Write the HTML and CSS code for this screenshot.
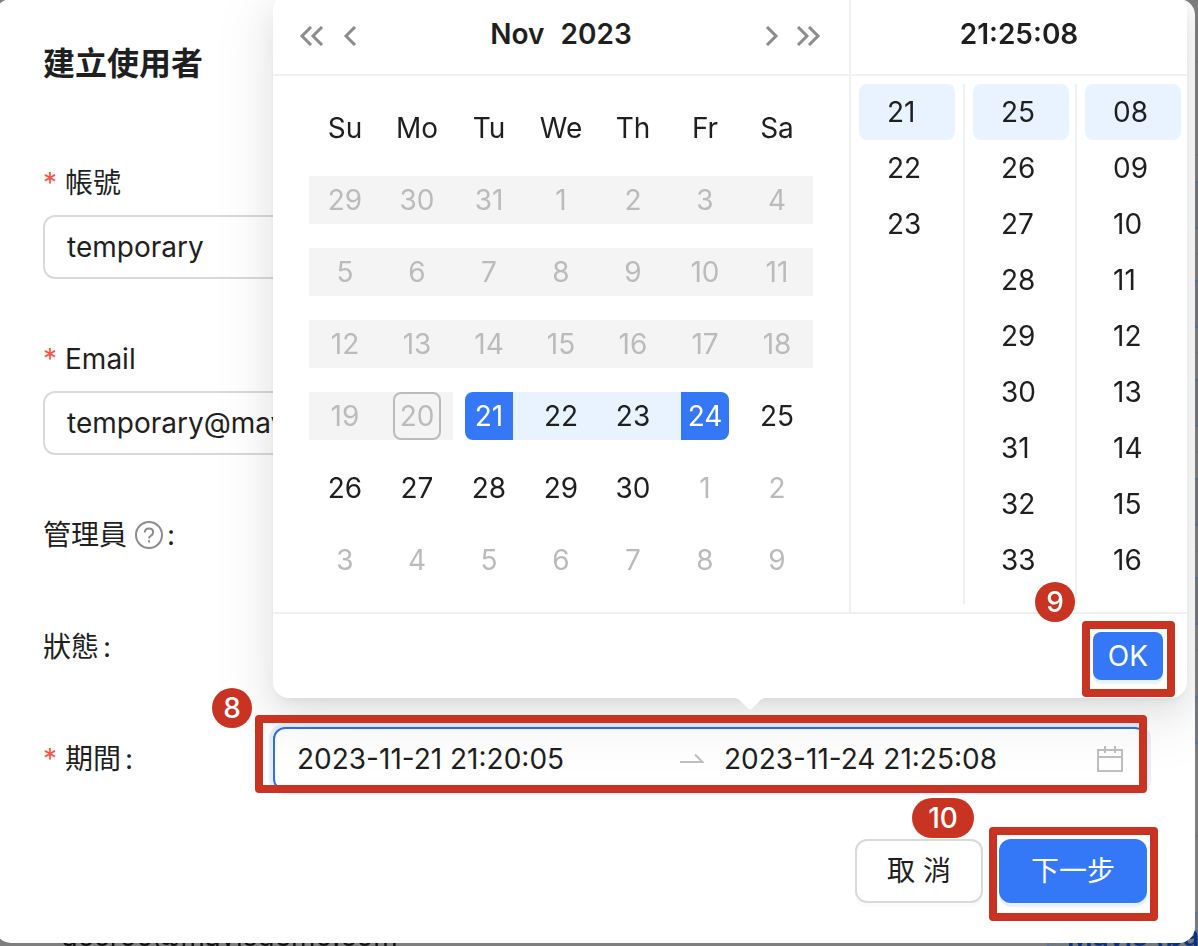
FILE: index.html
```html
<!DOCTYPE html>
<html lang="zh-Hant">
<head>
  <meta charset="UTF-8">
  <meta name="viewport" content="width=device-width, initial-scale=1">
  <title>建立使用者</title>
  <link rel="stylesheet" href="styles.css">
</head>
<body>

<div class="backdrop">
  <div class="user-row first"></div>
  <div class="user-row second"></div>
  <div class="user-row"><span class="tag"></span></div>
  <div class="user-row"><span class="tag"></span></div>
  <div class="user-row"><span class="tag"></span></div>
  <div class="user-row"><span class="tag"></span></div>
  <div class="user-row"><span class="tag"></span></div>
  <div class="user-row tall"><span class="tag"></span></div>
  <div class="user-row last"><span>accroo@mavisdemo.com</span><span class="tag">Mavis (pail)</span></div>
</div>

<main class="modal">
  <h1>建立使用者</h1>
  <form>
    <div class="item">
      <label class="required" for="account">帳號</label>
      <input class="text" id="account" type="text" value="temporary">
    </div>
    <div class="item">
      <label class="required" for="email">Email</label>
      <input class="text" id="email" type="text" value="temporary@mavisdemo.com">
    </div>
    <div class="item inline">
      <label for="admin">管理員
        <svg class="help" viewBox="0 0 28 28" fill="none" stroke="#8c8c8c" stroke-width="2">
          <circle cx="14" cy="14" r="13"/>
          <path d="M9.8 11.6c0-2.6 1.800-4.200 4.200-4.200s4.200 1.600 4.200 3.900c0 2-1.200 2.900-2.500 3.600-1.200.7-1.700 1.200-1.700 2.600"/>
          <path d="M14 19.300v2.200"/>
        </svg></label>
      <input id="admin" type="checkbox">
    </div>
    <div class="item inline">
      <label for="status">狀態</label>
      <input id="status" type="checkbox">
    </div>
    <div class="item inline">
      <label class="required" for="start">期間</label>
      <div class="range">
        <input id="start" type="text" value="2023-11-21 21:20:05">
        <svg class="arrow" viewBox="0 0 24 24" fill="none" stroke="#bfbfbf" stroke-width="2"><path d="M0 15h22.500L15 7.500"/></svg>
        <input type="text" aria-label="結束時間" value="2023-11-24 21:25:08">
        <svg class="calendar-icon" viewBox="0 0 26 28" fill="none" stroke="#bfbfbf" stroke-width="2"><path d="M1 5h24v21H1zM1 12h24M8 1v7M18 1v7"/></svg>

        <div class="picker">
          <div class="panels">
            <div class="date-panel">
              <div class="panel-head">
                <button type="button" class="nav" aria-label="上一年"><svg viewBox="0 0 26 20"><path d="M12 1L3 10l9 9M23 1l-9 9 9 9"/></svg></button>
                <button type="button" class="nav short" aria-label="上個月"><svg viewBox="0 0 14 20"><path d="M12 1L3 10l9 9"/></svg></button>
                <div class="month"><button type="button">Nov</button><button type="button">2023</button></div>
                <button type="button" class="nav short" aria-label="下個月"><svg viewBox="0 0 14 20"><path d="M2 1l9 9-9 9"/></svg></button>
                <button type="button" class="nav" aria-label="下一年"><svg viewBox="0 0 26 20"><path d="M3 1l9 9-9 9M14 1l9 9-9 9"/></svg></button>
              </div>
              <table class="dates">
                <thead>
                  <tr><th>Su</th><th>Mo</th><th>Tu</th><th>We</th><th>Th</th><th>Fr</th><th>Sa</th></tr>
                </thead>
                <tbody>
                  <tr class="off"><td><span>29</span></td><td><span>30</span></td><td><span>31</span></td><td><span>1</span></td><td><span>2</span></td><td><span>3</span></td><td><span>4</span></td></tr>
                  <tr class="off"><td><span>5</span></td><td><span>6</span></td><td><span>7</span></td><td><span>8</span></td><td><span>9</span></td><td><span>10</span></td><td><span>11</span></td></tr>
                  <tr class="off"><td><span>12</span></td><td><span>13</span></td><td><span>14</span></td><td><span>15</span></td><td><span>16</span></td><td><span>17</span></td><td><span>18</span></td></tr>
                  <tr><td class="off"><span>19</span></td><td class="off today"><span>20</span></td><td class="range-start"><span>21</span></td><td class="in-range"><span>22</span></td><td class="in-range"><span>23</span></td><td class="range-end"><span>24</span></td><td><span>25</span></td></tr>
                  <tr><td><span>26</span></td><td><span>27</span></td><td><span>28</span></td><td><span>29</span></td><td><span>30</span></td><td class="next"><span>1</span></td><td class="next"><span>2</span></td></tr>
                  <tr class="next"><td><span>3</span></td><td><span>4</span></td><td><span>5</span></td><td><span>6</span></td><td><span>7</span></td><td><span>8</span></td><td><span>9</span></td></tr>
                </tbody>
              </table>
            </div>
            <div class="time-panel">
              <div class="panel-head">21:25:08</div>
              <div class="columns">
                <ul><li class="selected">21</li><li>22</li><li>23</li></ul>
                <ul><li class="selected">25</li><li>26</li><li>27</li><li>28</li><li>29</li><li>30</li><li>31</li><li>32</li><li>33</li></ul>
                <ul><li class="selected">08</li><li>09</li><li>10</li><li>11</li><li>12</li><li>13</li><li>14</li><li>15</li><li>16</li></ul>
              </div>
            </div>
          </div>
          <div class="picker-foot">
            <div class="marked">
              <button type="button" class="btn primary small">OK</button>
              <span class="mark mark-ok"></span>
              <span class="step step-9">9</span>
            </div>
          </div>
          <svg class="tip" viewBox="0 0 32 12" fill="#fff"><path d="M0 0c3 0 4.500 1 6.500 3l7.500 7.500q2 1.500 4 0L25.500 3c2-2 3.500-3 6.500-3z"/></svg>
        </div>

        <span class="mark mark-range"></span>
        <span class="step step-8">8</span>
      </div>
    </div>
    <div class="actions">
      <div class="marked">
        <button type="button" class="btn">取 消</button>
        <span class="step step-10">10</span>
      </div>
      <div class="marked">
        <button type="submit" class="btn primary">下一步</button>
        <span class="mark mark-next"></span>
      </div>
    </div>
  </form>
</main>

</body>
</html>
```

FILE: styles.css
```css
* {
  box-sizing: border-box;
}

body {
  margin: 0;
  overflow: hidden;
  font-family: Inter, "Noto Sans CJK TC", sans-serif;
  font-size: 28px;
  line-height: 44px;
  color: #1f1f1f;
  background: #7f7f7f;
}

input, button {
  font: inherit;
  color: inherit;
}

button {
  padding: 0;
  border: 0;
  background: none;
}

/* user list dimmed behind the dialog */
.backdrop {
  position: fixed;
  inset: 0;
}

.user-row {
  display: flex;
  align-items: center;
  justify-content: flex-end;
  height: 99px;
  border-bottom: 2px solid #787878;
}

.user-row.first { height: 63px; }
.user-row.second { height: 93px; }
.user-row.tall { height: 186px; padding-bottom: 46px; }

.user-row.last {
  height: 200px;
  justify-content: space-between;
  padding-left: 62px;
  color: #111;
}

.tag {
  width: 151px;
  height: 48px;
  padding-left: 18px;
  border: 2px solid #5874a0;
  border-right: 0;
  background: #73797f;
  color: #0f2f80;
  font-weight: 600;
  white-space: nowrap;
}

.modal {
  position: relative;
  margin: -1px 3px 0 -5px;
  padding: 41px 48px 40px;
  border-radius: 16px;
  background: #fff;
}

h1 {
  margin: 0 0 63px;
  font-size: 32px;
  line-height: 48px;
  font-weight: 600;
}

.item {
  margin-bottom: 48px;
}

.item label {
  display: flex;
  align-items: center;
  height: 64px;
}

.item.inline {
  display: grid;
  grid-template-columns: minmax(0, 5fr) minmax(0, 19fr);
  align-items: center;
}

.required::before {
  content: "*";
  margin-right: 8px;
  color: #f5564e;
}

.item.inline label::after {
  content: ":";
  margin-left: 4px;
}

.help {
  width: 28px;
  height: 28px;
  margin-left: 8px;
}

.text {
  display: block;
  width: 100%;
  height: 64px;
  padding: 0 22px;
  border: 2px solid #d9d9d9;
  border-radius: 12px;
  background: #fff;
}

.range {
  position: relative;
  display: flex;
  align-items: center;
  height: 64px;
  padding: 0 22px;
  border: 2px solid #2f6fed;
  border-radius: 12px;
  box-shadow: 0 0 0 4px #e6eefb;
}

.range input {
  flex: 1;
  min-width: 0;
  padding: 0;
  border: 0;
  outline: 0;
  background: none;
}

.arrow {
  width: 24px;
  height: 24px;
  margin: 0 20px 0 16px;
}

.calendar-icon {
  width: 26px;
  height: 28px;
  margin-left: 6px;
}

/* date and time dropdown */
.picker {
  position: absolute;
  left: -2px;
  right: -42px;
  bottom: 91px;
  border-radius: 16px;
  background: #fff;
  box-shadow: 0 12px 32px rgba(0, 0, 0, 0.08), 0 6px 12px -8px rgba(0, 0, 0, 0.12), 0 18px 56px 16px rgba(0, 0, 0, 0.05);
}

.panels {
  display: grid;
  grid-template-columns: 578fr 336fr;
  border-bottom: 2px solid #f0f0f0;
}

.date-panel {
  border-right: 2px solid #f0f0f0;
}

.panel-head {
  display: flex;
  align-items: center;
  justify-content: center;
  height: 82px;
  padding: 0 26px;
  border-bottom: 2px solid #f0f0f0;
  font-weight: 600;
}

.nav {
  display: flex;
  width: 28px;
  height: 20px;
  margin-top: 4px;
}

.nav.short {
  width: 14px;
  margin: 4px 16px 0;
}

.nav svg {
  height: 20px;
  fill: none;
  stroke: #8c8c8c;
  stroke-width: 3;
}

.month {
  display: flex;
  flex: 1;
  justify-content: center;
  gap: 16px;
}

.dates {
  width: 504px;
  margin: 16px auto;
  border-collapse: collapse;
  table-layout: fixed;
}

.dates th, .dates td {
  height: 72px;
  padding: 0;
  font-weight: 400;
  text-align: center;
}

.dates td {
  background: center / 100% 48px no-repeat;
}

.dates span {
  display: inline-block;
  width: 48px;
  height: 48px;
  line-height: 48px;
  vertical-align: middle;
}

.off, .next {
  color: #bbb;
}

.dates tr.off td, .dates td.off {
  background-image: linear-gradient(#f4f4f4, #f4f4f4);
}

.dates .today span {
  border: 2px solid #bbb;
  border-radius: 8px;
  line-height: 44px;
}

.dates .in-range {
  background-image: linear-gradient(#e8f3ff, #e8f3ff);
}

.dates .range-start {
  background-image: linear-gradient(to right, transparent 50%, #e8f3ff 50%);
}

.dates .range-end {
  background-image: linear-gradient(to left, transparent 50%, #e8f3ff 50%);
}

.range-start span {
  border-radius: 8px 0 0 8px;
  background: #3478f7;
  color: #fff;
}

.range-end span {
  border-radius: 0 8px 8px 0;
  background: #3478f7;
  color: #fff;
}

.columns {
  display: grid;
  grid-template-columns: repeat(3, 1fr);
}

.columns ul {
  height: 520px;
  margin: 8px 0;
  padding: 0 8px;
  list-style: none;
}

.columns ul + ul {
  padding-right: 6px;
  border-left: 2px solid #f0f0f0;
}

.columns li {
  height: 56px;
  padding-left: 28px;
  line-height: 56px;
}

.columns .selected {
  border-radius: 8px;
  background: #e8f3ff;
}

.picker-foot {
  display: flex;
  justify-content: flex-end;
  padding: 18px 24px;
}

.tip {
  position: absolute;
  top: 100%;
  left: 50%;
  width: 32px;
  height: 12px;
  margin-left: 4px;
}

.btn {
  display: block;
  height: 64px;
  padding: 0 30px;
  border: 2px solid #d9d9d9;
  border-radius: 12px;
  background: #fff;
  box-shadow: 0 4px 0 rgba(0, 0, 0, 0.02);
}

.btn.primary {
  padding: 0 32px;
  border: 0;
  background: #3478f7;
  color: #fff;
  box-shadow: 0 4px 0 #e8f1fe;
}

.btn.small {
  height: 48px;
  padding: 0 15px;
  border-radius: 8px;
}

.actions {
  display: flex;
  justify-content: flex-end;
  gap: 16px;
}

/* tutorial callouts */
.marked {
  position: relative;
}

.mark {
  position: absolute;
  border: 8px solid #c93322;
  border-radius: 4px;
  pointer-events: none;
}

.mark-range { inset: -14px -2px -4px -20px; }
.mark-ok { inset: -11px -12px -17px -11px; }
.mark-next { inset: -12px -11px -18px -10px; }

.step {
  position: absolute;
  min-width: 40px;
  height: 40px;
  border-radius: 20px;
  background: #c93322;
  color: #fff;
  font-weight: 500;
  line-height: 40px;
  text-align: center;
}

.step-8 { left: -63px; top: -41px; }
.step-9 { right: 88px; bottom: 58px; }
.step-10 { right: 9px; bottom: 65px; width: 62px; }
```
